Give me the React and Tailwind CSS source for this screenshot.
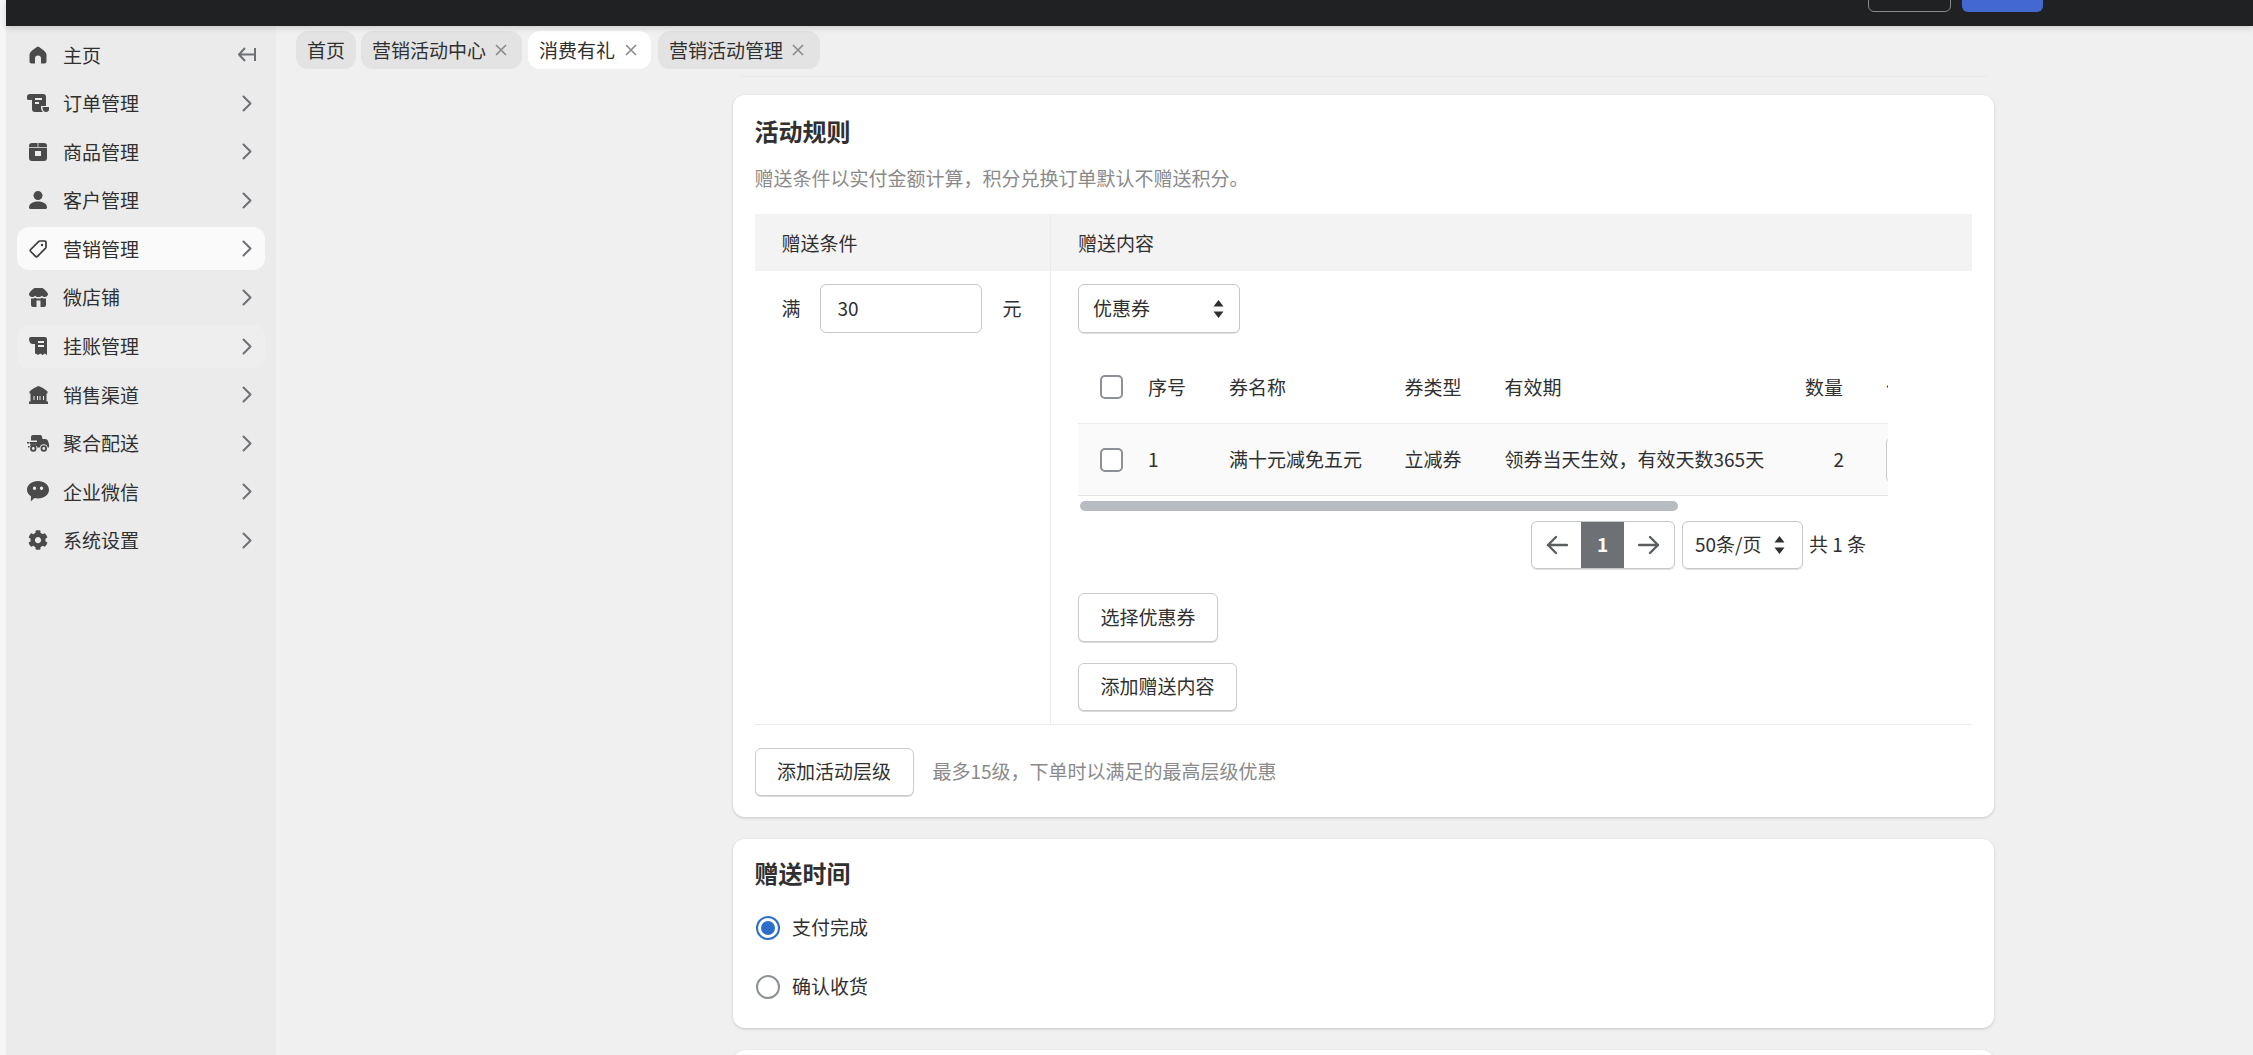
import React from "react";
import { FaCog } from "react-icons/fa";

const Svg = ({ w = 18, h = 18, children, className = "" }) => (
  <svg width={w} height={h} viewBox={`0 0 ${w} ${h}`} fill="#4a4a4a" fillRule="evenodd" className={className}>{children}</svg>
);

const icons = {
  home: <Svg><path d="M9 .5 8 .9C6 2 2 5 1 7c-.4.8-.5 1.5-.5 2.5v6c0 1.2.8 2 2 2H6v-5a3 3 0 0 1 6 0v5h3.5c1.2 0 2-.8 2-2v-6c0-1-.1-1.7-.5-2.5-1-2-5-5-7-6.1L9 .5z" /></Svg>,
  order: <Svg w={22}><path d="M3 0h13a3 3 0 0 1 3 3v9h-5v2c0 1.5 1 3 2 4H8a3 3 0 0 1-3-3V6H1.5A1.5 1.5 0 0 1 0 4.5V3a3 3 0 0 1 3-3zM8 4v2h7V4zM8 8v2h4V8z" /><path d="M15.5 13H22v2a3 3 0 0 1-3 3h-.5c-2-.5-3-2-3-5z" /></Svg>,
  box: <Svg><path d="M3 0h12a3 3 0 0 1 3 3v12a3 3 0 0 1-3 3H3a3 3 0 0 1-3-3V3a3 3 0 0 1 3-3zM8.6 0v4h.8V0zM0 4v.8h18V4zM6 8v5h6V8z" /></Svg>,
  user: <Svg><circle cx="9" cy="4.6" r="4.5" /><path d="M0 16.5C0 13 3.5 10.5 9 10.5s9 2.5 9 6c0 .9-.6 1.5-1.5 1.5h-15C.6 18 0 17.4 0 16.5z" /></Svg>,
  tag: <svg width="18" height="18" viewBox="0 0 18 18" fill="none" stroke="#3a3a3a" strokeWidth="1.7"><path d="M11 1h5a1 1 0 0 1 1 1v5a2 2 0 0 1-.6 1.4L8.5 16.3a1.5 1.5 0 0 1-2 0L1.7 11.5a1.5 1.5 0 0 1 0-2L9.6 1.6A2 2 0 0 1 11 1z" /><circle cx="13" cy="5" r="1.2" fill="#3a3a3a" stroke="none" /></svg>,
  store: <Svg w={19} h={19}><path d="M6 0h7c2 .5 5 3.500 6 6 0 2-1.600 3-3.200 3-1 0-2-.6-2.800-1.300C12.200 8.400 11 9 9.500 9S6.800 8.400 6 7.700C5.200 8.400 4.200 9 3.200 9 1.600 9 0 8 0 6c1-2.500 4-5.500 6-6z" /><path d="M2 10.500c1.300.3 2.700 0 3.900-.8 2.200 1.200 5 1.200 7.200 0 1.200.8 2.600 1.100 3.900.8V17a2 2 0 0 1-2 2H4a2 2 0 0 1-2-2zM7.500 12.500V19h4v-6.500z" /></Svg>,
  receipt: <Svg><path d="M2 0h14a2 2 0 0 1 2 2v16l-2.200-1.500L13.500 18l-2.200-1.500L9 18l-2.200-1.500-.8.5V7H3.500C2 7 1 6 .5 4.500L0 2a2 2 0 0 1 2-2zM9 4v2h6V4zM9 8v2h6V8z" /></Svg>,
  bank: <Svg w={19}><path d="M9.500 0c3 1 6.500 3 9 5.500v2h-1v8H19V18H0v-2.500h1.500v-8h-1v-2C3 3 6.500 1 9.500 0zM4.500 10v4h1v-4zM8 10v4h1v-4zM10.500 10v4h1v-4zM14 10v4h1v-4z" /></Svg>,
  truck: <svg width="22" height="18" viewBox="0 0 22 18" fill="#4a4a4a"><path d="M6 1h7c1 0 1.500.5 2 1.500L15.500 5H18c1.500 0 2.500.8 3 2l1 3v3.500h-1.300a4 4 0 0 0-7.900 0h-2.600a4 4 0 0 0-7.900 0H1V12h8v-1.500H3V8h7V6.500H4V3a2 2 0 0 1 2-2z" /><path d="M0 8h2.500v1.500H0z" /><circle cx="6.300" cy="14.500" r="2.300" fill="none" stroke="#4a4a4a" strokeWidth="1.800" /><circle cx="16.800" cy="14.500" r="2.300" fill="none" stroke="#4a4a4a" strokeWidth="1.800" /></svg>,
  chat: <Svg w={22} h={21}><path d="M11 0c6 0 11 3.700 11 8.700s-5 8.700-11 8.700c-1.300 0-2.500-.2-3.600-.5L3.800 20.500l.2-5.200C1.600 13.800 0 11.400 0 8.700 0 3.700 5 0 11 0zM7.500 5.500a1.700 1.700 0 1 0 0 3.400 1.700 1.700 0 0 0 0-3.400zM14.500 5.500a1.700 1.700 0 1 0 0 3.400 1.700 1.700 0 0 0 0-3.400z" /></Svg>,
  gear: <FaCog size={20} color="#4a4a4a" />,
};

const Chevron = () => (
  <svg width="10" height="17" viewBox="0 0 10 17" fill="none" stroke="#6d7175" strokeWidth="2" strokeLinecap="round" strokeLinejoin="round"><path d="M1.500 1.500l7 7-7 7" /></svg>
);
const Close = () => (
  <svg width="14" height="14" viewBox="0 0 14 14" fill="none" stroke="#8a8a8a" strokeWidth="1.600"><path d="M2 2l10 10M12 2L2 12" /></svg>
);
const Collapse = () => (
  <svg width="18" height="15" viewBox="0 0 18 15" fill="none" stroke="#6d7175" strokeWidth="2" strokeLinejoin="round"><path d="M7 1L1 7.500 7 14M1 7.500h15M17 1v13" /></svg>
);
const Updown = () => (
  <svg width="11" height="20" viewBox="0 0 11 20" fill="#303030"><path d="M5.500 1L10.500 7.500H.5zM.5 12.500h10L5.500 19z" /></svg>
);
const Arrow = ({ dir }) => (
  <svg width="22" height="20" viewBox="0 0 22 20" fill="none" stroke="#5c5f62" strokeWidth="2.400" strokeLinecap="round" strokeLinejoin="round">
    {dir === "left" ? <path d="M10 2l-8 8 8 8M2 10h19" /> : <path d="M12 2l8 8-8 8M20 10H1" />}
  </svg>
);

const menu = [
  ["主页", "home"], ["订单管理", "order"], ["商品管理", "box"], ["客户管理", "user"], ["营销管理", "tag"],
  ["微店铺", "store"], ["挂账管理", "receipt"], ["销售渠道", "bank"], ["聚合配送", "truck"], ["企业微信", "chat"], ["系统设置", "gear"],
];

const Btn = ({ children, className = "" }) => (
  <button className={`flex h-[48px] items-center justify-center rounded-[6px] border border-[#c9cccf] bg-white pb-[2px] text-[19px] text-[#303030] shadow-[0_1px_0_rgba(0,0,0,0.15)] ${className}`}>{children}</button>
);
const Check = () => <span className="block h-[24px] w-[23px] rounded-[5px] border-2 border-[#8c9196] bg-white" />;
const rowGrid = "grid grid-cols-[70px_81px_175.5px_100px_300.5px_81px_200px] items-center w-[1100px]";

export default function App() {
  return (
    <div className="h-[1055px] w-full overflow-hidden bg-[#f6f6f6] pl-[6px] font-['Noto_Sans_CJK_SC',sans-serif] text-[19px] leading-[28px] text-[#303030]">
      <header className="relative z-10 flex h-[26px] items-end justify-end gap-[11px] overflow-hidden bg-[#202123] pb-[14px] pr-[210px] shadow-[0_2px_6px_rgba(0,0,0,0.15)]">
        <span className="h-[30px] w-[83px] rounded-[6px] border border-[#8a8a8a]" />
        <span className="h-[30px] w-[81px] rounded-[6px] bg-[#4369d1]" />
      </header>
      <div className="flex h-[1029px]">
        <aside className="flex w-[270px] shrink-0 flex-col gap-[5.6px] bg-[#ebebeb] pt-[7px]">
          {menu.map(([label, icon], i) => (
            <div key={label} className={`mx-[11px] flex h-[43px] items-center rounded-[12px] pl-[9px] pr-[13px] ${i === 4 ? "bg-[#fafafa]" : i === 6 ? "bg-[#eeeeee]" : ""}`}>
              <span className="flex w-[24px] justify-center">{icons[icon]}</span>
              <span className="ml-[13px] flex-1 whitespace-nowrap">{label}</span>
              {i === 0 ? <span className="-mr-[4px]"><Collapse /></span> : <Chevron />}
            </div>
          ))}
        </aside>
        <main className="min-w-0 flex-1 bg-[#f0f0f0]">
          <nav className="flex gap-[5px] pl-[20px] pt-[5px]">
            <span className="flex h-[38px] w-[60px] items-center justify-center rounded-[12px] bg-[#e3e3e3]">首页</span>
            <span className="flex h-[38px] w-[161px] items-center justify-between rounded-[12px] bg-[#e3e3e3] pl-[11px] pr-[14px]">营销活动中心<Close /></span>
            <span className="ml-[1px] flex h-[38px] w-[123px] items-center justify-between rounded-[12px] bg-white pl-[11px] pr-[13px]">消费有礼<Close /></span>
            <span className="ml-[2px] flex h-[38px] w-[162px] items-center justify-between rounded-[12px] bg-[#e3e3e3] pl-[11px] pr-[15px]">营销活动管理<Close /></span>
          </nav>
          <div className="ml-[457px] w-[1261px]">
            <div className="mx-[7px] mt-[7px] border-b border-[#e9e9e9]" />
            <section className="mt-[18px] rounded-[12px] bg-white pb-[21px] pl-[21.500px] pr-[22px] pt-[20px] shadow-[0_1px_3px_rgba(0,0,0,0.18)]">
              <h2 className="text-[24px] font-bold leading-[32px]">活动规则</h2>
              <p className="mt-[17px] text-[#8a8a8a]">赠送条件以实付金额计算，积分兑换订单默认不赠送积分。</p>
              <div className="mt-[22px] flex h-[57px] bg-[#f3f3f3]">
                <div className="flex w-[296.500px] items-center border-r border-[#ebebeb] pl-[27px]">赠送条件</div>
                <div className="flex items-center pl-[27px]">赠送内容</div>
              </div>
              <div className="flex border-b border-[#ebebeb]">
                <div className="flex w-[296.500px] shrink-0 items-start border-r border-[#ebebeb] pl-[27px] pt-[13px]">
                  <span className="leading-[47px]">满</span>
                  <span className="ml-[19px] flex h-[49px] w-[162px] items-center rounded-[6px] border border-[#c4c7ca] pb-[2px] pl-[17px]">30</span>
                  <span className="ml-[21px] leading-[47px]">元</span>
                </div>
                <div className="min-w-0 flex-1 pl-[27px] pt-[13px] pb-[13px]">
                  <div className="flex h-[49px] w-[162px] items-center justify-between rounded-[6px] border border-[#c4c7ca] pl-[14px] pr-[15px] shadow-[0_1px_0_rgba(0,0,0,0.12)]"><span className="pb-[2px]">优惠券</span><Updown /></div>
                  <div className="mt-[18px] w-[810px] overflow-hidden">
                    <div className={`${rowGrid} h-[72px]`}>
                      <span className="pl-[22px]"><Check /></span>
                      <span>序号</span>
                      <span>券名称</span>
                      <span>券类型</span>
                      <span>有效期</span>
                      <span>数量</span>
                      <span>价值</span>
                    </div>
                    <div className={`${rowGrid} h-[73px] border-y border-[#ececec] border-b-[#e1e3e5] bg-[#fafafa]`}>
                      <span className="pl-[22px]"><Check /></span>
                      <span className="pb-[2px]">1</span>
                      <span className="pb-[2px]">满十元减免五元</span>
                      <span className="pb-[2px]">立减券</span>
                      <span className="whitespace-nowrap pb-[2px]">领券当天生效，有效天数365天</span>
                      <span className="w-[39px] pb-[2px] text-right">2</span>
                      <span className="block h-[46px] w-[100px] rounded-[6px] border border-[#c9cccf] bg-white" />
                    </div>
                  </div>
                  <div className="mx-[2px] mt-[5px] h-[10px] w-[598px] rounded-full bg-[#b6bcc1]" />
                  <div className="ml-[453px] mt-[10px] flex items-center whitespace-nowrap">
                    <div className="flex h-[48px] w-[144px] overflow-hidden rounded-[6px] border border-[#c4c7ca] shadow-[0_1px_0_rgba(0,0,0,0.12)]">
                      <span className="flex w-[49px] items-center justify-center"><Arrow dir="left" /></span>
                      <span className="flex w-[43px] items-center justify-center bg-[#6d7175] pb-[2px] font-bold text-white">1</span>
                      <span className="flex flex-1 items-center justify-center"><Arrow dir="right" /></span>
                    </div>
                    <div className="ml-[7px] flex h-[48px] w-[121px] items-center justify-between rounded-[6px] border border-[#c4c7ca] pl-[12px] pr-[17px] shadow-[0_1px_0_rgba(0,0,0,0.12)]"><span className="pb-[2px]">50条/页</span><Updown /></div>
                    <span className="ml-[6px] pb-[2px]">共 1 条</span>
                  </div>
                  <Btn className="mt-[24px] h-[49px] w-[140px]">选择优惠券</Btn>
                  <Btn className="mt-[21px] w-[159px]">添加赠送内容</Btn>
                </div>
              </div>
              <div className="mt-[23px] flex items-center">
                <Btn className="w-[159px]">添加活动层级</Btn>
                <span className="ml-[19px] pb-[2px] text-[#8a8a8a]">最多15级，下单时以满足的最高层级优惠</span>
              </div>
            </section>
            <section className="mt-[22px] rounded-[12px] bg-white pb-[29px] pl-[21.500px] pt-[18px] shadow-[0_1px_3px_rgba(0,0,0,0.18)]">
              <h2 className="text-[24px] font-bold leading-[32px]">赠送时间</h2>
              <div className="mt-[27px] flex h-[24px] items-center pl-[1px]">
                <span className="flex h-[24px] w-[24px] items-center justify-center rounded-full border-2 border-[#2c6ecb]"><span className="h-[14px] w-[14px] rounded-full bg-[#2c6ecb]" /></span>
                <span className="ml-[12.500px] pb-[2px]">支付完成</span>
              </div>
              <div className="mt-[35px] flex h-[24px] items-center pl-[1px]">
                <span className="h-[24px] w-[24px] rounded-full border-2 border-[#8c9196]" />
                <span className="ml-[12.500px] pb-[2px]">确认收货</span>
              </div>
            </section>
            <section className="mt-[22px] h-[200px] rounded-[12px] bg-white shadow-[0_1px_3px_rgba(0,0,0,0.18)]" />
          </div>
        </main>
      </div>
    </div>
  );
}
